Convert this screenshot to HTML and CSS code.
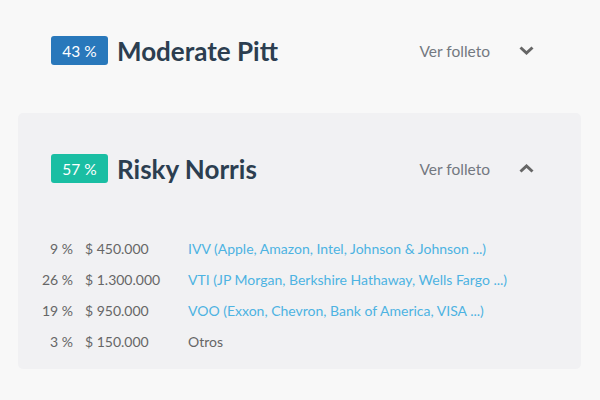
FILE: index.html
```html
<!DOCTYPE html>
<html>
<head>
<meta charset="utf-8">
<link rel="stylesheet" href="styles.css">
</head>
<body>
<div class="list">
  <section class="item">
    <div class="head">
      <span class="badge blue">43 %</span>
      <h2 class="title">Moderate Pitt</h2>
      <span class="more">Ver folleto</span>
      <svg class="chev" width="15" height="9" viewBox="0 0 15 9"><polyline points="1.5,1.5 7.5,7 13.5,1.5" fill="none" stroke="#666" stroke-width="3"/></svg>
    </div>
  </section>
  <section class="item card">
    <div class="head">
      <span class="badge teal">57 %</span>
      <h2 class="title">Risky Norris</h2>
      <span class="more">Ver folleto</span>
      <svg class="chev" width="15" height="9" viewBox="0 0 15 9"><polyline points="1.5,7.5 7.5,2 13.5,7.5" fill="none" stroke="#666" stroke-width="3"/></svg>
    </div>
    <div class="rows">
      <div class="row"><span class="pct">9 %</span><span class="amt">$ 450.000</span><a class="fund">IVV (Apple, Amazon, Intel, Johnson &amp; Johnson ...)</a></div>
      <div class="row"><span class="pct">26 %</span><span class="amt">$ 1.300.000</span><a class="fund">VTI (JP Morgan, Berkshire Hathaway, Wells Fargo ...)</a></div>
      <div class="row"><span class="pct">19 %</span><span class="amt">$ 950.000</span><a class="fund">VOO (Exxon, Chevron, Bank of America, VISA ...)</a></div>
      <div class="row"><span class="pct">3 %</span><span class="amt">$ 150.000</span><span class="other">Otros</span></div>
    </div>
  </section>
</div>
</body>
</html>
```
FILE: styles.css
```css
html, body {
  margin: 0;
  padding: 0;
  background: #f8f8f8;
  font-family: Lato, "Open Sans", sans-serif;
}
.list {
  width: 563px;
  margin-left: 18px;
}
.item {
  padding: 36px 47px 48px 33px;
}
.card {
  background: #f1f1f3;
  border-radius: 5px;
  padding: 41px 47px 12px 33px;
}
.head {
  display: flex;
  align-items: center;
  height: 29px;
}
.badge {
  width: 57px;
  height: 29px;
  box-sizing: border-box;
  border-radius: 3px;
  color: #fff;
  font-size: 15.5px;
  line-height: 30px;
  text-align: center;
}
.blue { background: #2978bb; }
.teal { background: #1abea3; }
.title {
  margin: 0 0 0 9px;
  font-size: 26px;
  font-weight: 700;
  color: #2c3e50;
  flex: 1;
}
.more {
  font-size: 15.5px;
  color: #737880;
  margin-right: 29px;
}
.chev { display: block; }
.rows {
  margin-top: 50px;
  margin-left: -18px;
}
.row {
  display: flex;
  height: 31px;
  line-height: 31px;
  font-size: 14px;
  color: #666;
  white-space: nowrap;
}
.pct {
  width: 40px;
  text-align: right;
}
.amt {
  width: 103px;
  margin-left: 12px;
}
.fund {
  color: #4db3e2;
}
.other { color: #666; }
```
